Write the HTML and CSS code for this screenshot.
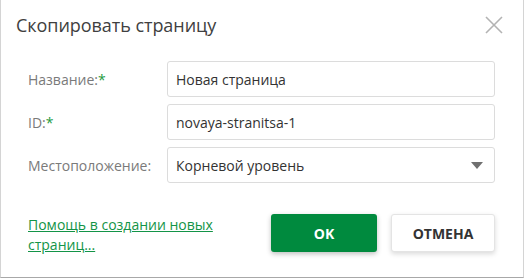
FILE: index.html
```html
<!DOCTYPE html>
<html lang="ru">
<head>
<meta charset="utf-8">
<link rel="stylesheet" href="styles.css">
</head>
<body>
<div class="dialog">
  <div class="header">
    <div class="title">Скопировать страницу</div>
    <button class="close" aria-label="Закрыть">
      <svg width="18" height="18" viewBox="0 0 18 18"><path d="M1 1L17 17M17 1L1 17" stroke="#b3b3b3" stroke-width="1.6" fill="none"/></svg>
    </button>
  </div>
  <div class="form">
    <label class="label">Название:<span class="req">*</span></label>
    <div class="field">Новая страница</div>
    <label class="label">ID:<span class="req">*</span></label>
    <div class="field">novaya-stranitsa-1</div>
    <label class="label">Местоположение:</label>
    <div class="field select">Корневой уровень
      <svg class="caret" width="12" height="7" viewBox="0 0 12 7"><path d="M0 0H12L6 7Z" fill="#707070"/></svg>
    </div>
  </div>
  <div class="footer">
    <a class="help" href="#">Помощь в создании новых страниц...</a>
    <div class="buttons">
      <button class="btn ok">OK</button>
      <button class="btn cancel">ОТМЕНА</button>
    </div>
  </div>
</div>
</body>
</html>
```
FILE: styles.css
```css
html, body {
  margin: 0;
  padding: 0;
  background: #ffffff;
}
body {
  font-family: "Open Sans", "Noto Sans", sans-serif;
  color: #333;
}
.dialog {
  box-sizing: border-box;
  width: 524px;
  height: 278px;
  background: #fff;
  border: 1px solid #d4d4d4;
  border-top: none;
  border-bottom-color: #a8a8a8;
  box-shadow: 0 1px 3px rgba(0,0,0,0.25);
}
.header {
  display: flex;
  justify-content: space-between;
  align-items: flex-start;
  padding: 12px 20px 0 15px;
  height: 48px;
  box-sizing: border-box;
}
.title {
  font-size: 18px;
  line-height: 26px;
  color: #404040;
  letter-spacing: -0.05px;
}
.close {
  border: none;
  background: none;
  padding: 0;
  margin-top: 4px;
  width: 18px;
  height: 18px;
  display: flex;
}
.form {
  display: grid;
  grid-template-columns: 139px 1fr;
  row-gap: 7px;
  padding: 13px 28px 0 27px;
  align-items: center;
}
.label {
  font-size: 14px;
  color: #7a7a7a;
}
.req {
  color: #1e9b3e;
}
.field {
  box-sizing: border-box;
  height: 36px;
  border: 1px solid #dcdcdc;
  border-radius: 3px;
  padding: 0 8px;
  display: flex;
  align-items: center;
  font-size: 14px;
  color: #333;
}
.select {
  justify-content: space-between;
  padding-right: 11px;
}
.footer {
  display: flex;
  align-items: flex-start;
  padding: 31px 28px 0 27px;
}
.help {
  width: 200px;
  font-size: 14px;
  line-height: 20px;
  color: #139447;
  text-decoration: underline;
  margin-top: 1px;
}
.buttons {
  margin-left: auto;
  display: flex;
  gap: 14px;
}
.btn {
  height: 38px;
  border-radius: 3px;
  font-family: "Open Sans", "Noto Sans", sans-serif;
  font-weight: 700;
  font-size: 14px;
  cursor: pointer;
}
.ok {
  width: 106px;
  background: #008a3e;
  color: #fff;
  border: none;
  box-shadow: 0 2px 5px rgba(0,0,0,0.25);
}
.cancel {
  width: 104px;
  background: #fff;
  color: #333;
  border: 1px solid #e4e4e4;
  box-shadow: 0 2px 5px rgba(0,0,0,0.15);
}
```
